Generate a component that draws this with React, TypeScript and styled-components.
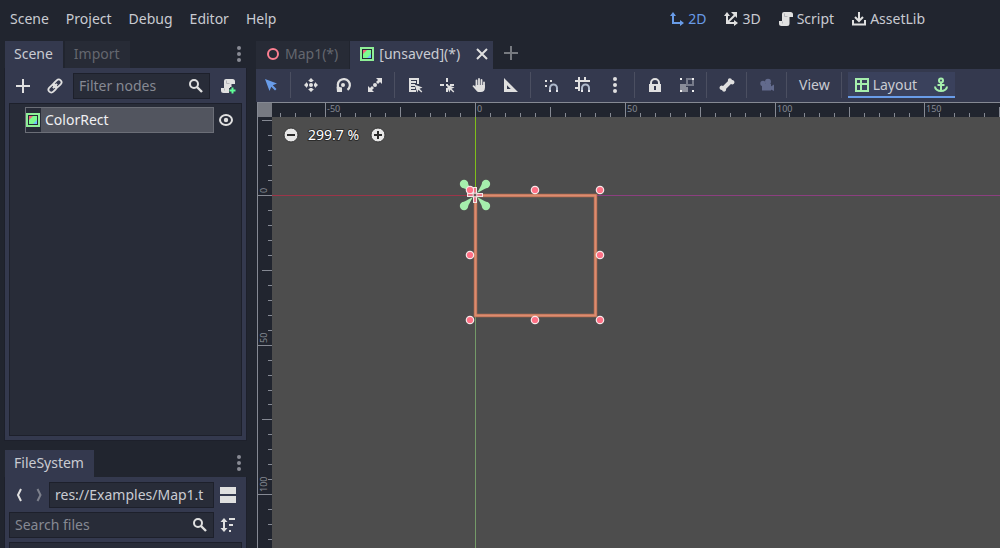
import React, { useLayoutEffect, useRef, useState } from "react";
import styled, { createGlobalStyle, css } from "styled-components";

const color = {
  base: "#21252f",
  panel: "#34394e",
  field: "#282c38",
  tabIdle: "#272b36",
  edge: "#1d202b",
  text: "#c9cbd2",
  bright: "#e0e0e0",
  faint: "#64676f",
  hint: "#868993",
  accent: "#699ce8",
  green: "#a5efac",
  canvas: "#4d4d4d",
  tick: "#858993",
  handle: "#ff7085",
};

const Global = createGlobalStyle`
  * { box-sizing: border-box; }
  body {
    margin: 0;
    background: ${color.base};
    color: ${color.text};
    font: 14px/20px "Noto Sans", sans-serif;
  }
  button, input { font: inherit; color: inherit; }
`;

const plainButton = css`
  border: 0;
  padding: 0;
  background: none;
  display: flex;
  align-items: center;
  justify-content: center;
`;

/* ---------- icons ---------- */

const Svg = styled.svg`
  display: block;
  flex: none;
  width: 16px;
  height: 16px;
`;

type IconName = keyof typeof shapes;

const cursor = <path fill="#e0e0e0" d="M7.500 7.500l8 3-3 1.200 2.800 2.800-1 1-2.800-2.800L10.300 15.500z" />;
const magnet = (
  <>
    <path d="M7 14v-3a3.500 3.500 0 0 1 7 0v3" fill="none" stroke="#aeb9cc" strokeWidth="2" />
    <path d="M6 13h2v2H6zM13 13h2v2h-2z" fill="#e8e8ec" />
  </>
);
const scroll = (
  <>
    <path fill="#e0e0e0" d="M6 1a2 2 0 0 0-2 2v7H1v2.500A2.500 2.500 0 0 0 3.500 15H9a2.500 2.500 0 0 0 2.500-2.500V6H15V3.500A2.500 2.500 0 0 0 12.500 1z" />
    <path fill="none" stroke="#b4b5ba" d="M6.500 2.500v3h3M4.500 10.500v2" />
  </>
);

const shapes = {
  add: <path d="M8 1v14M1 8h14" stroke="currentColor" strokeWidth="2" />,
  link: (
    <g fill="none" stroke="#e0e0e0" strokeWidth="1.800" transform="rotate(-45 8 8)">
      <rect x="0" y="5.200" width="9" height="5.600" rx="2.800" />
      <rect x="7" y="5.200" width="9" height="5.600" rx="2.800" />
      <path d="M5 8h6" />
    </g>
  ),
  search: (
    <g fill="none" stroke="#e0e0e0" strokeWidth="2">
      <circle cx="6" cy="6" r="4" />
      <path d="M9 9l5 5" strokeWidth="2.400" />
    </g>
  ),
  scriptAdd: (
    <>
      {scroll}
      <path d="M9 12.500h7M12.500 9v7" stroke={color.panel} strokeWidth="5" />
      <path d="M9.500 12.500h6M12.500 9.500v6" stroke="#5fff97" strokeWidth="2" />
    </>
  ),
  script: scroll,
  colorRect: (
    <>
      <rect x="1" y="1" width="14" height="14" fill="#8eef97" />
      <path d="M3 3h10v10H3z" fill="#252a35" />
      <path d="M4 4h8v8H4z" fill="#7dfb8f" />
      <path d="M4 4h4l-4 4z" fill="#f2647a" />
      <path d="M12 8v4H8z" fill="#70bfff" />
    </>
  ),
  eye: (
    <>
      <ellipse cx="8" cy="8" rx="6" ry="5" fill="none" stroke="#e0e0e0" strokeWidth="2" />
      <circle cx="8" cy="8" r="2.200" fill="#e0e0e0" />
    </>
  ),
  dots: (
    <g fill="currentColor">
      <circle cx="8" cy="2" r="2" />
      <circle cx="8" cy="8" r="2" />
      <circle cx="8" cy="14" r="2" />
    </g>
  ),
  back: <path d="M10 2L7 8l3 6" fill="none" stroke="currentColor" strokeWidth="2" />,
  forward: <path d="M6.500 2l3 6-3 6" fill="none" stroke="currentColor" strokeWidth="2" />,
  split: <path d="M0 0h16v7H0zM0 9h16v7H0z" fill="#e0e0e0" />,
  sort: (
    <>
      <path d="M4 4v8" stroke="#e0e0e0" strokeWidth="2" />
      <path d="M4 1l3.500 4h-7zM4 15l3.500-4h-7zM9 1h6v2H9zM9 7h4v2H9zM9 13h2v2H9z" fill="#e0e0e0" />
    </>
  ),
  node2d: <circle cx="8" cy="8" r="5" fill="none" stroke="#fc7f91" strokeWidth="2" />,
  close: <path d="M3 3l10 10M13 3L3 13" stroke="#e0e0e0" strokeWidth="2" />,
  view2d: (
    <>
      <path d="M4 3v9h9" fill="none" stroke="currentColor" strokeWidth="2" />
      <path d="M4 1l3 4H1zM15 12l-4 3V9z" fill="currentColor" />
    </>
  ),
  view3d: (
    <>
      <path d="M4 3v9h9M4 12l8-8" fill="none" stroke="currentColor" strokeWidth="2" />
      <path d="M4 1l3 4H1zM15 12l-4 3V9zM8 1h6v6z" fill="currentColor" />
    </>
  ),
  asset: (
    <g fill="none" stroke="currentColor" strokeWidth="2">
      <path d="M8 1v8M4 6l4 4 4-4M2 9v4.500h12V9" />
    </g>
  ),
  select: <path fill={color.accent} d="M2 2l12 4.500-4.200 1.800 3.700 3.700-1.500 1.500-3.700-3.700L6.500 14z" />,
  move: (
    <g fill="#e0e0e0">
      <circle cx="8" cy="8" r="2" />
      <path d="M8 1l3 3H9.500v1h-3V4H5zM8 15l3-3H9.500v-1h-3v1H5zM1 8l3-3v1.500h1v3H4V11zM15 8l-3-3v1.500h-1v3h1V11z" />
    </g>
  ),
  rotate: (
    <>
      <path d="M4.300 12A6 6 0 1 1 12.500 12.800" fill="none" stroke="#e0e0e0" strokeWidth="2.200" />
      <path d="M1.500 9.500l5.500 1v4.500H2z" fill="#e0e0e0" />
      <circle cx="8" cy="8" r="2" fill="#e0e0e0" />
    </>
  ),
  scale: (
    <g fill="#e0e0e0">
      <circle cx="8" cy="8" r="2" />
      <path d="M9 1h6v6l-2-2-2 2-2-2 2-2zM7 15H1V9l2 2 2-2 2 2-2 2z" />
    </g>
  ),
  list: (
    <>
      <path d="M2 1h10v6h-2V3H4v1h5v2H4v1h4v2H4v1h4v2H4v1h5v2H2z" fill="#e0e0e0" />
      {cursor}
    </>
  ),
  pivot: (
    <>
      <path d="M7 1h2v4H7zM1 7h4v2H1zM11 7h4v2h-4zM7 11h2v4H7zM7 7h2v2H7z" fill="#e0e0e0" />
      {cursor}
    </>
  ),
  pan: (
    <>
      <path
        d="M5.500 10V3.500M8 9V2M10.500 9V3M13 10V5.500"
        stroke="#e0e0e0"
        strokeWidth="1.800"
        strokeLinecap="round"
      />
      <path d="M4.600 8h9.300v3c0 2.500-1.500 4-4 4H8.500c-1.500 0-2.400-.6-3.200-1.600L1.500 9.300C1.700 8 3 8 3.600 8.800l1 1.100z" fill="#e0e0e0" />
    </>
  ),
  ruler: <path fillRule="evenodd" d="M1 1l14 14H1zM4 8.200V12h3.800z" fill="#e0e0e0" />,
  snap: (
    <>
      <path d="M2 3h2v2H2zM7 3h2v2H7zM2 8h2v2H2z" fill="#e0e0e0" />
      {magnet}
    </>
  ),
  gridSnap: (
    <>
      <path d="M4 0v14M10 0v5M0 4h15M0 11h5" fill="none" stroke="#e0e0e0" strokeWidth="2" />
      {magnet}
    </>
  ),
  lock: (
    <>
      <path d="M4 8V6a4 4 0 0 1 8 0v2" fill="none" stroke="#e0e0e0" strokeWidth="2" />
      <path fillRule="evenodd" d="M2 7h12v8H2zM7 9v4h2V9z" fill="#e0e0e0" />
    </>
  ),
  group: (
    <>
      <path d="M1 7h6v3h2v5H1z" fill="#8a8d99" />
      <path d="M8 2h6v6H8z" fill="none" stroke="#777b8a" strokeWidth="2" />
      <path d="M1 1h2v2H1zM13 1h2v2h-2zM1 13h2v2H1zM13 13h2v2h-2z" fill="#f0f0f0" />
    </>
  ),
  bone: (
    <>
      <path d="M4.500 11.500l7-7" stroke="#e0e0e0" strokeWidth="4" />
      <path d="M10.800 1.300a2.200 2.200 0 0 1 2.200 1.700 2.200 2.200 0 1 1-1 4l-3-3a2.200 2.200 0 0 1 1.800-2.700zM5.200 14.700A2.200 2.200 0 0 1 3 13a2.200 2.200 0 1 1 1-4l3 3a2.200 2.200 0 0 1-1.800 2.700z" fill="#e0e0e0" />
    </>
  ),
  camera: (
    <g fill="#626a8c">
      <circle cx="4" cy="6.500" r="2.700" />
      <circle cx="9" cy="4.700" r="3" />
      <path d="M3 7h9v6.500H3zM11 10l4-2.500V14l-4-2z" />
    </g>
  ),
  layout: <path d="M2 2h12v12H2zM2 7h12M7 2v12" fill="none" stroke={color.green} strokeWidth="2" />,
  anchor: (
    <g fill="none" stroke={color.green} strokeWidth="2">
      <circle cx="8" cy="3.500" r="2" />
      <path d="M8 5.500V14M4.500 8h7M2 9.500a6 4.500 0 0 0 12 0" />
    </g>
  ),
  zoomOut: (
    <>
      <circle cx="8" cy="8" r="7" fill="#e6e6e6" stroke="#353535" />
      <path d="M4 8h8" stroke="#2a2a2a" strokeWidth="2" />
    </>
  ),
  zoomIn: (
    <>
      <circle cx="8" cy="8" r="7" fill="#e6e6e6" stroke="#353535" />
      <path d="M4 8h8M8 4v8" stroke="#2a2a2a" strokeWidth="2" />
    </>
  ),
};

const Icon = ({ name }: { name: IconName }) => (
  <Svg viewBox="0 0 16 16" aria-hidden="true">
    {shapes[name]}
  </Svg>
);

/* ---------- frame ---------- */

const Window = styled.div`
  display: flex;
  flex-direction: column;
  height: 100vh;
  min-height: 500px;
  overflow: hidden;
`;

const MenuBar = styled.header`
  display: flex;
  justify-content: space-between;
  flex: none;
  height: 41px;
  padding: 0 69px 4px 4px;
`;

const MenuGroup = styled.nav`
  display: flex;
  gap: 5px;
`;

const MenuButton = styled.button<{ $active?: boolean }>`
  ${plainButton}
  gap: 3px;
  padding: 0 6px;
  color: ${(p) => (p.$active ? color.accent : color.text)};
  svg { color: ${(p) => (p.$active ? color.accent : color.bright)}; }
`;

const Body = styled.div`
  display: flex;
  flex: 1;
  min-height: 0;
  gap: 10px;
  padding-left: 5px;
`;

const Side = styled.aside`
  display: flex;
  flex-direction: column;
  flex: none;
  gap: 10px;
  width: 241px;
`;

const Dock = styled.section`
  display: flex;
  flex-direction: column;
`;

const TabBar = styled.div`
  display: flex;
  flex: none;
  gap: 2px;
  height: 27px;
`;

const Tab = styled.button<{ $active?: boolean }>`
  ${plainButton}
  padding: 0 10px 2px 9px;
  color: ${(p) => (p.$active ? color.text : color.faint)};
  background: ${(p) => (p.$active ? color.panel : color.tabIdle)};
`;

const DockMenu = styled.button`
  ${plainButton}
  width: 14px;
  padding-bottom: 2px;
  margin-left: auto;
  color: #888b94;
`;

const DockPanel = styled.div`
  display: flex;
  flex-direction: column;
  gap: 4px;
  padding: 5px 4px 4px;
  background: ${color.panel};
  box-shadow: 0 0 0 1px ${color.edge};
  clip-path: inset(0 -1px -1px -1px);
`;

const Row = styled.div<{ $tight?: boolean }>`
  display: flex;
  align-items: center;
  gap: ${(p) => (p.$tight ? 0 : 4)}px;
`;

const Field = styled.label`
  display: flex;
  align-items: center;
  flex: 1;
  min-width: 0;
  height: 26px;
  padding: 0 5px;
  background: ${color.field};
  border: 1px solid ${color.edge};
`;

const TextInput = styled.input`
  flex: 1;
  width: 0;
  padding: 0;
  border: 0;
  outline: 0;
  background: none;
  &::placeholder { color: ${color.hint}; opacity: 1; }
`;

const IconButton = styled.button<{ $width?: number; $dim?: boolean }>`
  ${plainButton}
  flex: none;
  width: ${(p) => p.$width ?? 28}px;
  height: 26px;
  color: ${(p) => (p.$dim ? "#7d808c" : color.bright)};
`;

const Tree = styled.ul`
  height: 333px;
  margin: 0;
  padding: 3px 3px 0 15px;
  list-style: none;
  background: ${color.field};
  border: 1px solid ${color.edge};
`;

const TreeRow = styled.li`
  display: flex;
  align-items: center;
`;

const TreeItem = styled.div`
  display: flex;
  align-items: center;
  flex: 1;
  gap: 4px;
  height: 26px;
  color: #f0f0f2;
  background: linear-gradient(90deg, ${color.field} 16px, #52555f 16px);
  box-shadow: inset 0 0 0 1px #6b6e77;
`;

const FileList = styled.div`
  height: 120px;
  background: ${color.field};
  border: 1px solid ${color.edge};
`;

/* ---------- editor ---------- */

const Main = styled.main`
  display: flex;
  flex-direction: column;
  flex: 1;
  min-width: 0;
`;

const SceneTabs = styled(TabBar)`
  gap: 1px;
  height: 28px;
`;

const SceneTab = styled.div<{ $active?: boolean }>`
  display: flex;
  align-items: center;
  padding: 0 ${(p) => (p.$active ? 3 : 11)}px 2px 9px;
  gap: 14px;
  color: ${(p) => (p.$active ? color.text : color.faint)};
  background: ${(p) => (p.$active ? color.panel : color.tabIdle)};
`;

const SceneTabLabel = styled.button`
  ${plainButton}
  gap: 4px;
`;

const CloseButton = styled.button`
  ${plainButton}
`;

const NewTab = styled(CloseButton)`
  padding: 0 0 4px 9px;
  color: #777a80;
`;

const Toolbar = styled.div`
  display: flex;
  flex: none;
  gap: 4px;
  height: 33px;
  padding: 3px 0 4px 1px;
  background: ${color.panel};
`;

const Divider = styled.span`
  width: 4px;
  background: linear-gradient(#4b4f61, #4b4f61) 1px 0 / 1px 100% no-repeat;
`;

const ToolText = styled.button`
  ${plainButton}
  gap: 3px;
  padding: 0 6px;
`;

const LayoutGroup = styled.div`
  display: flex;
  gap: 4px;
  background: #3a415c;
  box-shadow: inset 0 -2px ${color.accent};
`;

const Viewport = styled.div`
  display: grid;
  flex: 1;
  min-height: 0;
  grid-template: 14px 1fr / 14px 1fr;
  margin-left: 1px;
  border-top: 1px solid ${color.tick};
  border-left: 1px solid ${color.tick};
`;

const Corner = styled.div`
  background: #777a82;
`;

const RulerTrack = styled.div`
  min-width: 0;
  min-height: 0;
  overflow: hidden;
`;

const RulerSvg = styled.svg`
  display: block;
  width: 100%;
  height: 100%;
  fill: ${color.tick};
  font-size: 9px;
`;

const Canvas = styled.div`
  position: relative;
  min-height: 0;
  overflow: hidden;
  background: ${color.canvas};
`;

const Scene = styled.svg`
  display: block;
  width: 100%;
  height: 100%;
`;

const ZoomBar = styled.div`
  position: absolute;
  top: 8px;
  left: 11px;
  display: flex;
  align-items: center;
  gap: 9px;
  color: #fff;
`;

const ZoomValue = styled.span`
  padding-right: 2px;
  -webkit-text-stroke: 2px #2b2b2b;
  paint-order: stroke fill;
`;

const ORIGIN_X = 203;
const ORIGIN_Y = 78;
const SCALE = 2.997;

/* Tick marks every 5 units, taller every 25, labelled every 50. */
function Ruler({ origin, vertical }: { origin: number; vertical?: boolean }) {
  const track = useRef<HTMLDivElement>(null);
  const [extent, setExtent] = useState(0);

  useLayoutEffect(() => {
    const node = track.current;
    if (!node) return;
    const measure = () => setExtent(vertical ? node.clientHeight : node.clientWidth);
    measure();
    const observer = new ResizeObserver(measure);
    observer.observe(node);
    return () => observer.disconnect();
  }, [vertical]);

  const marks = [];
  const first = Math.ceil(-origin / SCALE / 5) * 5;
  for (let unit = first; origin + unit * SCALE < extent; unit += 5) {
    const at = Math.floor(origin + unit * SCALE);
    const length = unit % 50 === 0 ? 14 : unit % 25 === 0 ? 10 : 4;
    marks.push(
      <React.Fragment key={unit}>
        {vertical ? (
          <rect x={14 - length} y={at} width={length} height="1" />
        ) : (
          <rect x={at} y={14 - length} width="1" height={length} />
        )}
        {unit % 50 === 0 &&
          (vertical ? (
            <text transform={`translate(9 ${at - 2}) rotate(-90)`}>{unit}</text>
          ) : (
            <text x={at + 2} y="9">{unit}</text>
          ))}
      </React.Fragment>
    );
  }
  return (
    <RulerTrack ref={track}>
      <RulerSvg aria-hidden="true">{marks}</RulerSvg>
    </RulerTrack>
  );
}

const handles = [
  [198, 73], [263, 73], [328, 73],
  [198, 138], [328, 138],
  [198, 203], [263, 203], [328, 203],
];

const SceneView = () => (
  <Scene role="img" aria-label="Scene canvas">
    <rect x="0" y={ORIGIN_Y} width={ORIGIN_X} height="1" fill="#9c3549" />
    <rect x={ORIGIN_X} y={ORIGIN_Y} width="100%" height="1" fill="#8c3f80" />
    <rect x={ORIGIN_X} y="0" width="1" height={ORIGIN_Y} fill="#7fbf1a" />
    <rect x={ORIGIN_X} y={ORIGIN_Y} width="1" height="100%" fill="#749a68" />
    <rect x="203.500" y="78.500" width="120" height="120" fill="#505050" stroke="#b56d50" strokeWidth="3.500" />
    <rect x="203.500" y="78.500" width="120" height="120" fill="none" stroke="#dc8c70" strokeWidth="2" />
    <g fill="#a5efac">
      {[45, 135, 225, 315].map((angle) => (
        <g key={angle} transform={`translate(203 78) rotate(${angle})`}>
          <path d="M3 0l10-3v6z" />
          <circle cx="15.500" cy="0" r="4.200" />
        </g>
      ))}
    </g>
    {handles.map(([x, y]) => (
      <circle key={`${x}-${y}`} cx={x} cy={y} r="3.700" fill={color.handle} stroke="#f6e9ea" strokeWidth="1.200" />
    ))}
    <path d="M203 70v16M195 78h16" stroke="#f3e6e6" strokeWidth="4" />
    <path d="M203 71v14M196 78h14" stroke="#e8788a" strokeWidth="2" />
    <circle cx="203" cy="78" r="2" fill="#6b5b55" stroke="#f3e6e6" />
  </Scene>
);

const Tool = ({ name, label }: { name: IconName; label: string }) => (
  <IconButton aria-label={label}>
    <Icon name={name} />
  </IconButton>
);

export default function App() {
  return (
    <Window>
      <Global />
      <MenuBar>
        <MenuGroup aria-label="Main menu">
          {["Scene", "Project", "Debug", "Editor", "Help"].map((item) => (
            <MenuButton key={item}>{item}</MenuButton>
          ))}
        </MenuGroup>
        <MenuGroup aria-label="Workspace">
          <MenuButton $active><Icon name="view2d" />2D</MenuButton>
          <MenuButton><Icon name="view3d" />3D</MenuButton>
          <MenuButton><Icon name="script" />Script</MenuButton>
          <MenuButton><Icon name="asset" />AssetLib</MenuButton>
        </MenuGroup>
      </MenuBar>
      <Body>
        <Side>
          <Dock>
            <TabBar>
              <Tab $active>Scene</Tab>
              <Tab>Import</Tab>
              <DockMenu aria-label="Dock options"><Icon name="dots" /></DockMenu>
            </TabBar>
            <DockPanel>
              <Row>
                <IconButton aria-label="Add node"><Icon name="add" /></IconButton>
                <IconButton aria-label="Instance scene"><Icon name="link" /></IconButton>
                <Field>
                  <TextInput placeholder="Filter nodes" aria-label="Filter nodes" />
                  <Icon name="search" />
                </Field>
                <IconButton aria-label="Attach script"><Icon name="scriptAdd" /></IconButton>
              </Row>
              <Tree>
                <TreeRow>
                  <TreeItem><Icon name="colorRect" />ColorRect</TreeItem>
                  <IconButton $width={24} aria-label="Toggle visibility"><Icon name="eye" /></IconButton>
                </TreeRow>
              </Tree>
            </DockPanel>
          </Dock>
          <Dock>
            <TabBar>
              <Tab $active>FileSystem</Tab>
              <DockMenu aria-label="Dock options"><Icon name="dots" /></DockMenu>
            </TabBar>
            <DockPanel>
              <Row $tight>
                <IconButton $width={20} aria-label="Back"><Icon name="back" /></IconButton>
                <IconButton $width={20} $dim aria-label="Forward"><Icon name="forward" /></IconButton>
                <Field>
                  <TextInput defaultValue="res://Examples/Map1.t" aria-label="Path" />
                </Field>
                <IconButton aria-label="Toggle split mode"><Icon name="split" /></IconButton>
              </Row>
              <Row $tight>
                <Field>
                  <TextInput placeholder="Search files" aria-label="Search files" />
                  <Icon name="search" />
                </Field>
                <IconButton aria-label="Sort files"><Icon name="sort" /></IconButton>
              </Row>
              <FileList />
            </DockPanel>
          </Dock>
        </Side>
        <Main>
          <SceneTabs>
            <SceneTab>
              <SceneTabLabel><Icon name="node2d" />Map1(*)</SceneTabLabel>
            </SceneTab>
            <SceneTab $active>
              <SceneTabLabel><Icon name="colorRect" />[unsaved](*)</SceneTabLabel>
              <CloseButton aria-label="Close tab"><Icon name="close" /></CloseButton>
            </SceneTab>
            <NewTab aria-label="New scene"><Icon name="add" /></NewTab>
          </SceneTabs>
          <Toolbar>
            <Tool name="select" label="Select" />
            <Divider />
            <Tool name="move" label="Move" />
            <Tool name="rotate" label="Rotate" />
            <Tool name="scale" label="Scale" />
            <Divider />
            <Tool name="list" label="List select" />
            <Tool name="pivot" label="Change pivot" />
            <Tool name="pan" label="Pan" />
            <Tool name="ruler" label="Ruler" />
            <Divider />
            <Tool name="snap" label="Smart snap" />
            <Tool name="gridSnap" label="Grid snap" />
            <Tool name="dots" label="Snapping options" />
            <Divider />
            <Tool name="lock" label="Lock" />
            <Tool name="group" label="Group" />
            <Divider />
            <Tool name="bone" label="Skeleton options" />
            <Divider />
            <Tool name="camera" label="Override camera" />
            <Divider />
            <ToolText>View</ToolText>
            <Divider />
            <LayoutGroup>
              <ToolText><Icon name="layout" />Layout</ToolText>
              <Tool name="anchor" label="Anchor mode" />
            </LayoutGroup>
          </Toolbar>
          <Viewport>
            <Corner />
            <Ruler origin={ORIGIN_X + 0.3} />
            <Ruler origin={ORIGIN_Y + 0.2} vertical />
            <Canvas>
              <SceneView />
              <ZoomBar>
                <CloseButton aria-label="Zoom out"><Icon name="zoomOut" /></CloseButton>
                <ZoomValue>299.7 %</ZoomValue>
                <CloseButton aria-label="Zoom in"><Icon name="zoomIn" /></CloseButton>
              </ZoomBar>
            </Canvas>
          </Viewport>
        </Main>
      </Body>
    </Window>
  );
}
